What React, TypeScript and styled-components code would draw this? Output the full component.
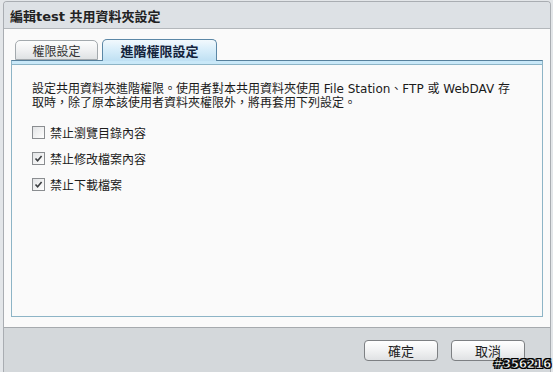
import React from "react";
import styled, { createGlobalStyle } from "styled-components";

const Global = createGlobalStyle`
  html, body {
    margin: 0;
    padding: 0;
    background: #e3e6e9;
    overflow: hidden;
  }
  #root {
    height: 372px;
  }
`;

const FONT = `Tahoma, "DejaVu Sans", "Noto Sans CJK TC", sans-serif`;

const Page = styled.div`
  position: relative;
  height: 372px;
  padding: 1px 2px 0 3px;
  box-sizing: border-box;
  font-family: ${FONT};
  color: #1b1b1b;
`;

const Window = styled.div`
  height: 371px;
  display: flex;
  flex-direction: column;
  border: 1px solid #a9adb2;
  border-bottom: none;
  border-radius: 4px 4px 0 0;
  box-sizing: border-box;
  overflow: hidden;
`;

const TitleBar = styled.div`
  height: 26px;
  flex: none;
  display: flex;
  align-items: center;
  padding-left: 6px;
  background: #dde1e5;
  border-bottom: 1px solid #b3b7bb;
  font-size: 13px;
  font-weight: bold;
  color: #222;
`;

const Body = styled.div`
  flex: 1;
  display: flex;
  flex-direction: column;
  padding: 10px 7px 8px 7px;
  background: #fafafa;
`;

const TabRow = styled.div`
  display: flex;
  align-items: flex-end;
  gap: 4px;
  padding-left: 4px;
  position: relative;
  z-index: 1;
  margin-bottom: -1px;
`;

const Tab = styled.div<{ $active?: boolean }>`
  box-sizing: border-box;
  height: ${(p) => (p.$active ? 22 : 20)}px;
  width: ${(p) => (p.$active ? 115 : 83)}px;
  margin-bottom: ${(p) => (p.$active ? 0 : 1)}px;
  display: flex;
  align-items: center;
  justify-content: center;
  font-size: ${(p) => (p.$active ? 13 : 12)}px;
  font-weight: ${(p) => (p.$active ? "bold" : "normal")};
  color: ${(p) => (p.$active ? "#13233b" : "#333")};
  border: 1px solid ${(p) => (p.$active ? "#5b87a6" : "#a3a9ad")};
  border-bottom: ${(p) => (p.$active ? "none" : "1px solid #a3a9ad")};
  border-radius: 5px 5px 0 0;
  background: ${(p) =>
    p.$active
      ? "linear-gradient(#f2f9fd 0%, #d9eefa 45%, #bfe0f3 100%)"
      : "linear-gradient(#fdfdfd 0%, #f0f1f2 50%, #dfe2e4 100%)"};
`;

const Panel = styled.div`
  height: 257px;
  box-sizing: border-box;
  border: 1px solid #8db4c6;
  border-top: 1px solid #56809c;
  background: #fafafa;
  display: flex;
  flex-direction: column;
`;

const PanelStrip = styled.div`
  height: 3px;
  background: #c9e8f8;
  border-bottom: 1px solid #8db4c6;
`;

const PanelContent = styled.div`
  padding: 17px 20px 0 20px;
  font-size: 12px;
`;

const Description = styled.div`
  line-height: 14px;
  white-space: nowrap;
  margin-bottom: 9px;
`;

const OptionRow = styled.label`
  height: 26px;
  display: flex;
  align-items: center;
  gap: 5px;
  font-size: 12px;
`;

const Box = styled.span`
  width: 13px;
  height: 13px;
  box-sizing: border-box;
  border: 1px solid #8a8d90;
  background: linear-gradient(135deg, #e2e4e6 0%, #f6f6f6 70%, #ffffff 100%);
  display: flex;
  align-items: center;
  justify-content: center;
`;

const Footer = styled.div`
  height: 45px;
  flex: none;
  border-top: 1px solid #a6aaae;
  background: #d4d8db;
  display: flex;
  justify-content: flex-end;
  align-items: flex-start;
  padding: 12px 25px 0 0;
  gap: 13px;
  box-sizing: border-box;
`;

const Button = styled.div`
  width: 74px;
  height: 21px;
  box-sizing: border-box;
  border: 1px solid #7d8083;
  border-radius: 4px;
  background: linear-gradient(#ffffff 0%, #f1f2f3 50%, #e0e2e4 100%);
  display: flex;
  align-items: center;
  justify-content: center;
  font-size: 13px;
  color: #222;
`;

const Watermark = styled.div`
  position: absolute;
  right: 2px;
  bottom: 1px;
  font-family: "DejaVu Sans", sans-serif;
  font-weight: bold;
  font-size: 12px;
  color: #fff;
  -webkit-text-stroke: 0.6px #000;
  text-shadow: 0 0 1px #000, 1px 1px 0 #000, -1px -1px 0 #000, 1px -1px 0 #000, -1px 1px 0 #000;
  letter-spacing: -0.3px;
`;

const Check = () => (
  <svg width="9" height="9" viewBox="0 0 9 9">
    <path d="M1.5 4.5 L3.6 6.8 L7.6 2" fill="none" stroke="#3a3d40" strokeWidth="1.6" />
  </svg>
);

const Option = ({ label, checked }: { label: string; checked?: boolean }) => (
  <OptionRow>
    <Box>{checked && <Check />}</Box>
    {label}
  </OptionRow>
);

export default function App() {
  return (
    <Page>
      <Global />
      <Window>
        <TitleBar>編輯test 共用資料夾設定</TitleBar>
        <Body>
          <TabRow>
            <Tab>權限設定</Tab>
            <Tab $active>進階權限設定</Tab>
          </TabRow>
          <Panel>
            <PanelStrip />
            <PanelContent>
              <Description>
                設定共用資料夾進階權限。使用者對本共用資料夾使用 File Station、FTP 或 WebDAV 存
                <br />
                取時，除了原本該使用者資料夾權限外，將再套用下列設定。
              </Description>
              <Option label="禁止瀏覽目錄內容" />
              <Option label="禁止修改檔案內容" checked />
              <Option label="禁止下載檔案" checked />
            </PanelContent>
          </Panel>
        </Body>
        <Footer>
          <Button>確定</Button>
          <Button>取消</Button>
        </Footer>
      </Window>
      <Watermark>#356216</Watermark>
    </Page>
  );
}
